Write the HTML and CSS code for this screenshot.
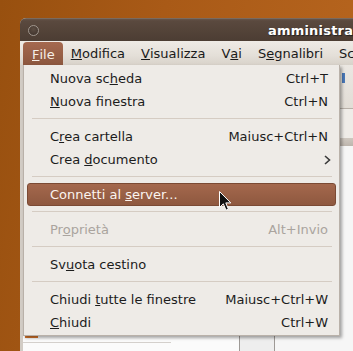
FILE: index.html
```html
<!DOCTYPE html>
<html>
<head>
<meta charset="utf-8">
<link rel="stylesheet" href="styles.css">
</head>
<body>
<div class="desktop">
  <div class="window">
    <div class="titlebar">
      <span class="wbtn"></span>
      <span class="title">amministratore</span>
    </div>
    <div class="menubar">
      <span class="mb-item active"><u>F</u>ile</span>
      <span class="mb-item"><u>M</u>odifica</span>
      <span class="mb-item"><u>V</u>isualizza</span>
      <span class="mb-item">V<u>a</u>i</span>
      <span class="mb-item">S<u>e</u>gnalibri</span>
      <span class="mb-item">Schede</span>
    </div>
    <div class="content">
      <div class="toolbar"><span class="tb-blue"></span></div>
      <div class="locbar"></div>
      <div class="tabstrip"></div>
      <div class="main">
        <div class="side"><span class="side-mark"></span><span class="side-line"></span></div>
        <div class="col"></div>
        <div class="list"></div>
      </div>
    </div>
  </div>

  <div class="menu">
    <div class="mi"><span>Nuova sc<u>h</u>eda</span><span class="sc">Ctrl+T</span></div>
    <div class="mi"><span><u>N</u>uova finestra</span><span class="sc">Ctrl+N</span></div>
    <div class="sep"></div>
    <div class="mi"><span>C<u>r</u>ea cartella</span><span class="sc">Maiusc+Ctrl+N</span></div>
    <div class="mi"><span>Crea <u>d</u>ocumento</span><svg class="chev" width="7" height="10" viewBox="0 0 7 10"><path d="M1 1 L5.5 5 L1 9" fill="none" stroke="#3a3a3a" stroke-width="1.6"/></svg></div>
    <div class="sep"></div>
    <div class="mi hl"><span>Connetti al <u>s</u>erver...</span><span class="sc"></span></div>
    <div class="sep"></div>
    <div class="mi dis"><span>Pr<u>o</u>prietà</span><span class="sc">Alt+Invio</span></div>
    <div class="sep"></div>
    <div class="mi"><span>Sv<u>u</u>ota cestino</span><span class="sc"></span></div>
    <div class="sep"></div>
    <div class="mi"><span>Chiudi <u>t</u>utte le finestre</span><span class="sc">Maiusc+Ctrl+W</span></div>
    <div class="mi"><span><u>C</u>hiudi</span><span class="sc">Ctrl+W</span></div>
  </div>

  <svg class="cursor" width="13" height="21" viewBox="0 0 13 21">
    <path d="M0.5 0.5 L0.5 16.5 L4.3 12.8 L7 19.2 L9.4 18.2 L6.8 11.9 L11.8 11.9 Z" fill="#111" stroke="#fff" stroke-width="1"/>
  </svg>
</div>
</body>
</html>
```
FILE: styles.css
```css
html, body {
  margin: 0;
  padding: 0;
}
body {
  font-family: "DejaVu Sans", sans-serif;
  font-size: 13px;
}
.desktop {
  position: relative;
  width: 353px;
  height: 351px;
  overflow: hidden;
  padding: 18px 0 0 20px;
  box-sizing: border-box;
  background: linear-gradient(100deg, #98500f 0%, #a95a17 40%, #b8661f 100%);
}
.window {
  width: 360px;
  height: 340px;
  display: flex;
  flex-direction: column;
  border-radius: 6px 0 0 0;
  overflow: hidden;
  background: #d9d4ce;
}
.titlebar {
  height: 23px;
  flex: none;
  display: flex;
  align-items: center;
  background: linear-gradient(#65544a 0px, #5a493e 2px, #4c3d33 100%);
  border-top: 1px solid #7a6a5e;
  box-sizing: border-box;
}
.wbtn {
  flex: none;
  width: 11px;
  height: 11px;
  box-sizing: border-box;
  border-radius: 50%;
  margin-left: 8px;
  border: 1px solid #a0968e;
  background: radial-gradient(circle at 50% 35%, #5d4e44, #3b2f28);
}
.title {
  flex: none;
  margin-left: 229px;
  color: #fff;
  font-weight: bold;
  font-size: 13px;
  letter-spacing: 0.2px;
  text-shadow: 1px 1px 1px #222;
  white-space: nowrap;
}
.menubar {
  height: 24px;
  flex: none;
  display: flex;
  align-items: stretch;
  padding-left: 3px;
  background: linear-gradient(#efebe6, #e4dfd8 60%, #d8d2ca);
  color: #1a1a1a;
}
.mb-item {
  flex: none;
  display: flex;
  align-items: center;
  padding: 1px 8px 0 8px;
  white-space: nowrap;
}
.mb-item.active {
  margin-top: 1px;
  background: linear-gradient(#a5694f, #8c573f);
  border-radius: 4px 4px 0 0;
  color: #f6eee8;
  padding-left: 9px;
}
.content {
  flex: 1;
  display: flex;
  flex-direction: column;
  border-left: 3px solid #d2ccc5;
}
.toolbar {
  height: 43px;
  background: linear-gradient(#ebe7e2, #e2ddd6);
  border-bottom: 1px solid #b8b0a8;
  position: relative;
}
.tb-blue {
  position: absolute;
  left: 319px;
  top: 8px;
  width: 3px;
  height: 10px;
  background: #4a78b8;
}
.locbar {
  height: 29px;
  background: #efece8;
}
.tabstrip {
  height: 8px;
  background: linear-gradient(#cfc8c0, #bdb5ad);
}
.main {
  flex: 1;
  display: flex;
  background: #ece9e5;
}
.side {
  width: 216px;
  background: #fbfbfb;
  border-right: 1px solid #9e9a96;
  position: relative;
}
.side-mark {
  position: absolute;
  left: 2px;
  top: 190px;
  width: 13px;
  height: 2px;
  background: #d8762c;
}
.side-line {
  position: absolute;
  left: 0;
  top: 196px;
  width: 148px;
  height: 1px;
  background: #d4d0cc;
}
.col {
  width: 34px;
  background: #eeeeee;
  border-right: 1px solid #9e9a96;
}
.list {
  flex: 1;
  background: #f6f6f6;
}

/* dropdown menu */
.menu {
  position: absolute;
  left: 23px;
  top: 65px;
  width: 317px;
  height: 271px;
  box-sizing: border-box;
  padding: 2px 3px;
  background: #eeebe7;
  border: 1px solid #b9b1a9;
  border-top: none;
  box-shadow: 2px 2px 3px rgba(0, 0, 0, 0.35);
  color: #1c1c1c;
}
.mi {
  height: 23px;
  display: flex;
  align-items: center;
  justify-content: space-between;
  padding: 0 8px 0 23px;
  white-space: nowrap;
  box-sizing: border-box;
}
.mi .sc {
  text-align: right;
}
.chev {
  margin-right: -3px;
}
.mi.hl {
  background: linear-gradient(#a4684d, #8e583f);
  border: 1px solid #7b4a34;
  border-radius: 3px;
  color: #fbf4ef;
  padding-left: 22px;
}
.mi.dis {
  color: #aaa49e;
}
.sep {
  height: 12px;
  display: flex;
  align-items: flex-start;
  padding: 0 4px 0 5px;
}
.sep::before {
  content: "";
  display: block;
  margin-top: 5px;
  flex: 1;
  height: 1px;
  background: #d5ccc3;
}
.cursor {
  position: absolute;
  left: 219px;
  top: 191px;
}
```
